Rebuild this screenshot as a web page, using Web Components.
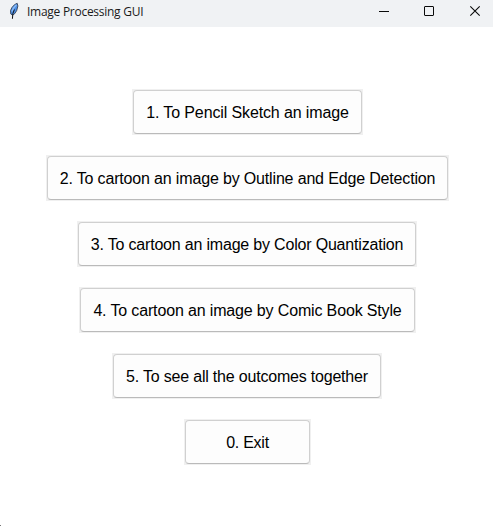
<!DOCTYPE html>
<html lang="en">
<head>
<meta charset="utf-8">
<title>Image Processing GUI</title>
<style>
html,body{margin:0;height:100%;background:#fff;overflow:hidden}
</style>
</head>
<body>
<app-window caption="Image Processing GUI">
  <tk-button style="--w:231px;--ls:-.125px">1. To Pencil Sketch an image</tk-button>
  <tk-button style="--w:403px;--ls:-.16px">2. To cartoon an image by Outline and Edge Detection</tk-button>
  <tk-button style="--w:340px;--ls:-.19px;margin-right:1px">3. To cartoon an image by Color Quantization</tk-button>
  <tk-button style="--w:337px;--ls:-.15px">4. To cartoon an image by Comic Book Style</tk-button>
  <tk-button style="--w:270px;--ls:-.2px;margin-right:1px">5. To see all the outcomes together</tk-button>
  <tk-button style="--w:127px;--ls:-.25px">0. Exit</tk-button>
</app-window>
<script>
class FeatherIcon extends HTMLElement{
  constructor(){super();this.attachShadow({mode:'open'}).innerHTML=`
<style>:host{display:block;width:12px;height:18px}svg{display:block}</style>
<svg width="12" height="18" viewBox="0 0 12 18">
<path d="M9.2 1.3 L9.9 4 L8.7 8.6 L6.6 11.8 L4.6 13.2 L2.8 12 L2.5 8.5 L4 5.4 L6.6 2.6Z" fill="#4c8fe6" stroke="#2a3444" stroke-width=".8"/>
<path d="M8.4 2.8 L5.4 6.2 L4 9.6" fill="none" stroke="#8dbcf5" stroke-width="1.3"/>
<path d="M6.4 7.5 L4.9 11.5 L4.4 16.8" fill="none" stroke="#111" stroke-width="1"/>
</svg>`}
}
customElements.define('feather-icon',FeatherIcon);

class TitleBar extends HTMLElement{
  constructor(){super();this.attachShadow({mode:'open'}).innerHTML=`
<style>
:host{display:flex;height:27px;box-sizing:border-box;background:#f0f2f4;align-items:flex-start;padding-left:8px;color:#1a1a1a;font:12px/24px "Open Sans","Noto Sans",sans-serif}
feather-icon{margin:2px 7px 0 0}
.t{flex:1;white-space:nowrap;letter-spacing:-.27px}
svg{display:block;flex:none}
</style>
<feather-icon></feather-icon><span class="t"><slot></slot></span>
<svg width="120" height="24" viewBox="0 0 120 24" fill="none" stroke="#0a0a0a">
<path d="M6 11.5H16"/><rect x="51.5" y="6.5" width="9" height="9" rx=".5"/><path d="M97.3 6.3L106.7 15.7M106.7 6.3L97.3 15.7" stroke-width="1.1"/></svg>`}
}
customElements.define('title-bar',TitleBar);

class TkButton extends HTMLElement{
  constructor(){super();this.attachShadow({mode:'open'}).innerHTML=`
<style>
:host{display:block;box-sizing:border-box;width:var(--w);height:46px;padding:1px;background:#f0f0f0}
button{display:flex;align-items:center;justify-content:center;box-sizing:border-box;width:100%;height:44px;margin:0;padding:2px 0 0;border:1px solid #d0d0d0;border-bottom-color:#bababa;border-radius:4px;background:#fdfdfd;color:#000;font:16px/20px "Liberation Sans",Arial,sans-serif;letter-spacing:var(--ls);white-space:nowrap}
</style>
<button><span><slot></slot></span></button>`}
}
customElements.define('tk-button',TkButton);

class AppWindow extends HTMLElement{
  constructor(){super();this.attachShadow({mode:'open'}).innerHTML=`
<style>
:host{display:flex;flex-direction:column;position:relative;width:493px;height:526px;background:#fff}
main{display:flex;flex-direction:column;align-items:center;gap:20px;padding:62px 0 0 2px}
i{position:absolute;left:0;bottom:0;width:1px;height:1px;background:#777}
</style>
<title-bar></title-bar><main><slot></slot></main><i></i>`;
  this.shadowRoot.querySelector('title-bar').textContent=this.getAttribute('caption')}
}
customElements.define('app-window',AppWindow);
</script>
</body>
</html>
